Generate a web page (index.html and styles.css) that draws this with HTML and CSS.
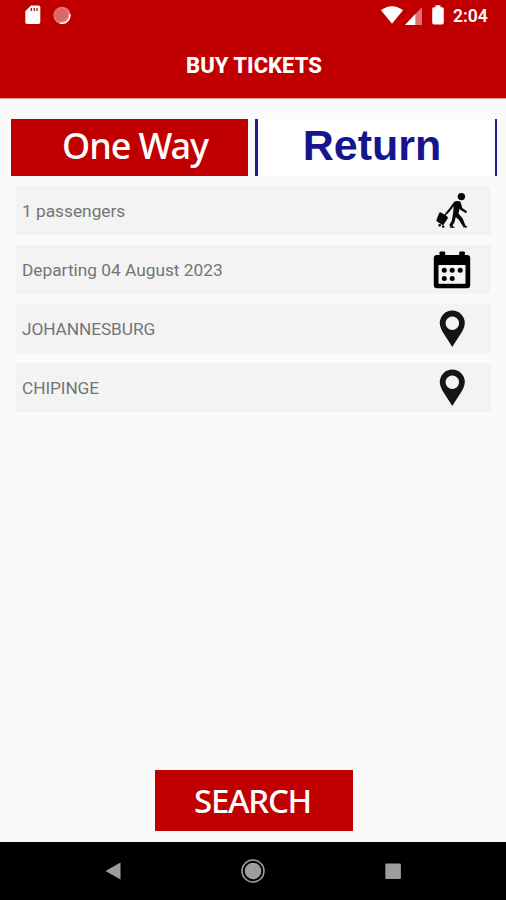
FILE: index.html
```html
<!DOCTYPE html>
<html lang="en">
<head>
<meta charset="utf-8">
<title>Buy Tickets</title>
<link rel="stylesheet" href="styles.css">
</head>
<body>
<div class="app">
  <header class="header">
    <div class="status">
      <svg class="sd" width="16" height="20" viewBox="0 0 16 20"><path fill="#fff" d="M6 0.5H13.5Q15.3 .5 15.3 2.3V17Q15.3 19 13.5 19H2Q.3 19 .3 17V6.2Z"/><path stroke="#c00000" stroke-width="1.3" d="M6.3 3v3M9.3 3v3M12 3v3"/></svg>
      <svg class="dot" width="18" height="19" viewBox="0 0 18 19"><circle cx="9" cy="9.3" r="8.6" fill="#e5777d"/><path d="M16.8 8A8 8 0 0 1 7 17" fill="none" stroke="#fff" stroke-width="1.4"/><circle cx="7.8" cy="8.4" r="6.4" fill="#d9666b"/></svg>
      <svg class="wifi" width="22" height="18" viewBox="0 0 22 18"><path fill="#fff" d="M0 4.3Q11-3.6 22 4.3L11 17.8Z"/></svg>
      <svg class="signal" width="18" height="18" viewBox="0 0 18 18"><path fill="#df7074" d="M17 0V18H0Z"/><path fill="#fff" d="M10.3 7.1V18H0Z"/></svg>
      <svg class="battery" width="12" height="20" viewBox="0 0 12 20"><path fill="#fff" d="M3.5 .3h5v2h1.5q1.8 0 1.8 1.8V17.5q0 2-1.8 2H2q-1.8 0-1.8-2V4.1Q.2 2.3 2 2.3h1.5Z"/></svg>
      <span class="clock">2:04</span>
    </div>
    <h1 class="title">BUY TICKETS</h1>
  </header>
  <main class="content">
    <div class="tabs">
      <div class="tab oneway"><span>One Way</span></div>
      <div class="tab return"><span>Return</span></div>
    </div>
    <div class="rows">
      <div class="row"><span class="passengers">1 passengers</span>
        <svg width="38" height="38" viewBox="-1.7 0 38 38" fill="#080808"><circle cx="26.7" cy="4.6" r="3.7"/><path d="M19.5 9.8Q23 8.1 25.8 9.8L27.6 16 32.4 19.5 31.2 21.2 25.6 17.7 25 16.5 23.8 21.5 28 26.5 31 34.2 28.2 34.2 24.3 28 21 25 19.8 30.2 17 35 14.5 33.2 17.2 28.6 18.5 20 19 14 16.5 17.6 12.5 22.2 11 20.8 14.8 16.2Z"/><path d="M16.5 33.2l3.3 1.8v.8h-5zM28.5 33.2l3.3.8q1.4 1 .3 1.600h-3.5z"/><path d="M6.4 20.5l6.1 4q1.2.9.5 2.1l-3.8 5.7q-.8 1.1-2 .4L2.3 29.6q-1.1-.8-.4-2L4.5 21q.6-1.2 1.9-.5Z"/><path d="M11 20.8l1.3.9-2.1 3.2-1.3-.9Z"/><circle cx="5" cy="33.3" r="1.300"/><circle cx="8.500" cy="34.6" r="1.3"/></svg></div>
      <div class="row"><span class="date">Departing 04 August 2023</span>
        <svg width="38" height="38" viewBox="0 0 38 38"><path fill="#000" d="M7.5.5h3.7q1 0 1 1V4h14V1.500q0-1 1-1h3.700q1 0 1 1V4H34q3.200 0 3.200 3.200V34Q37.200 37.200 34 37.200H4Q.8 37.200.8 34V7.200Q.8 4 4 4H6.500V1.500q0-1 1-1Z"/><path fill="#f5f5f5" d="M5.500 14h27v18.800h-27Z"/><g fill="#000"><circle cx="11.300" cy="19.300" r="2.500"/><circle cx="19.200" cy="19.300" r="2.500"/><circle cx="27.200" cy="19.300" r="2.500"/><circle cx="11.300" cy="27.400" r="2.500"/><circle cx="19.200" cy="27.400" r="2.500"/></g></svg></div>
      <div class="row"><span class="from">JOHANNESBURG</span>
        <svg width="38" height="38" viewBox="0 0 38 38"><path fill="#151515" fill-rule="evenodd" d="M19.300.6A12.500 12.500 0 0 1 31.800 13.200C31.800 20 24.500 28 19.300 37 14.200 28 6.800 20 6.800 13.200A12.500 12.500 0 0 1 19.300.6Zm0 5.900a6.700 6.700 0 1 0 .01 0Z"/></svg></div>
      <div class="row"><span class="to">CHIPINGE</span>
        <svg width="38" height="38" viewBox="0 0 38 38"><path fill="#151515" fill-rule="evenodd" d="M19.300.6A12.500 12.500 0 0 1 31.800 13.200C31.800 20 24.500 28 19.300 37 14.200 28 6.800 20 6.800 13.200A12.500 12.500 0 0 1 19.300.6Zm0 5.900a6.700 6.700 0 1 0 .01 0Z"/></svg></div>
    </div>
    <div class="search"><span>SEARCH</span></div>
  </main>
  <nav class="nav">
    <svg width="26" height="26" viewBox="0 0 26 26"><path fill="#9d9d9d" d="M5.500 13 20.500 4.500V21.500Z"/></svg>
    <svg width="26" height="26" viewBox="0 0 26 26"><circle cx="13" cy="13" r="11" fill="none" stroke="#9d9d9d" stroke-width="1.500"/><circle cx="13" cy="13" r="8.300" fill="#9d9d9d"/></svg>
    <svg width="26" height="26" viewBox="0 0 26 26"><rect x="5.300" y="5.500" width="15.600" height="15.600" rx="1" fill="#9d9d9d"/></svg>
  </nav>
</div>
</body>
</html>
```
FILE: styles.css
```css
* { box-sizing: border-box; }
body { margin: 0; background: #fafafa; font-family: Roboto, "Liberation Sans", sans-serif; }
svg { display: block; flex: none; }
span { white-space: nowrap; }
.app { width: 506px; height: 900px; display: flex; flex-direction: column; overflow: hidden; }
.header { height: 98px; flex: none; background: #c00000; box-shadow: 0 1px 1px #e4a5a5; }
.status { height: 32px; display: flex; align-items: flex-start; padding: 5px 0 0 25px; }
.dot { margin: 1px 0 0 12px; }
.wifi { margin: 1px 0 0 310px; }
.signal { margin: 2px 0 0 2px; }
.battery { margin-left: 9px; }
.clock { margin: 0 0 0 9px; color: #fff; font-size: 17.5px; line-height: 22px; font-weight: 600; }
.title { margin: 0; text-align: center; color: #fff; font-size: 22px; line-height: 68px; font-weight: 800; padding-left: 2px; }
.content { flex: 1; display: flex; flex-direction: column; padding-top: 21px; }
.tabs { display: flex; gap: 7px; height: 57px; padding: 0 9px 0 11px; }
.tab { display: flex; align-items: center; justify-content: center; }
.oneway { width: 237px; background: #c00000; color: #fff; font: 500 36px/50px "Noto Sans", sans-serif; letter-spacing: -1.1px; padding: 0 0 3px 11px; }
.return { flex: 1; background: #fff; border-left: 3px solid #1b1b92; border-right: 2px solid #1b1b92; color: #15158e; font: bold 43px/50px "Liberation Sans", sans-serif; padding: 0 9px 5px 0; }
.rows { display: grid; grid-auto-rows: 49px; gap: 10px; padding: 10px 15px 0 16px; }
.row { display: flex; align-items: center; justify-content: space-between; background: #f3f3f3; color: #757575; font-size: 17.300px; padding: 0 20px 0 6px; }
.from, .to { letter-spacing: -0.1px; }
.search { width: 198px; height: 61px; margin: auto 0 11px 155px; display: flex; align-items: center; justify-content: center; background: #c00000; color: #fff; font: 500 33px/50px "Noto Sans", sans-serif; letter-spacing: -1.3px; padding-right: 3px; }
.nav { height: 58px; flex: none; display: flex; justify-content: space-between; align-items: center; background: #000; padding: 0 100px; }
```
